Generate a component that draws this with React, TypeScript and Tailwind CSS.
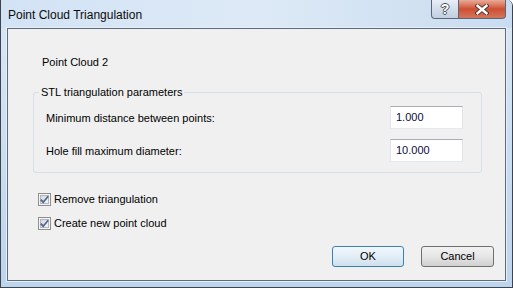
import React from "react";

function CheckBox() {
  return (
    <svg width="13" height="13" viewBox="0 0 13 13" className="shrink-0">
      <defs>
        <linearGradient id="cbg" x1="0" y1="0" x2="1" y2="1">
          <stop offset="0" stopColor="#d3d6da" />
          <stop offset="1" stopColor="#f7f7f7" />
        </linearGradient>
      </defs>
      <rect x="0.5" y="0.5" width="12" height="12" fill="#f4f4f4" stroke="#8e8f8f" />
      <rect x="2.5" y="2.5" width="8" height="8" fill="url(#cbg)" stroke="#b4b7bc" />
      <path
        d="M2.8 6.6 L5.2 9.2 L10.2 3.2"
        fill="none"
        stroke="#4c6291"
        strokeWidth="1.7"
      />
    </svg>
  );
}

function Check({ label, className }: { label: string; className?: string }) {
  return (
    <div className={"flex items-center gap-[3px] ml-[30px] h-[13px] " + (className ?? "")}>
      <CheckBox />
      <span className="leading-[13px]">{label}</span>
    </div>
  );
}

function Field({ label, value, className }: { label: string; value: string; className?: string }) {
  return (
    <div className={"flex items-center justify-between " + (className ?? "")}>
      <span className="leading-[14px]">{label}</span>
      <div className="w-[73px] h-[23px] bg-white border border-[#e2e3ea] border-t-[#abadb3] border-b-[#e3e9ef] flex items-center pl-[5px] text-[#0c0c3a]">
        {value}
      </div>
    </div>
  );
}

export default function App() {
  return (
    <div className="w-[513px] h-[288px] flex flex-col bg-linear-to-b from-[#dae8f6] to-[#bdd4ec] border-l border-r border-b border-[#3d4450] rounded-tr-[6px] font-['Liberation_Sans',Arial,sans-serif] text-black overflow-hidden">
      <div className="h-[28px] flex items-start justify-between bg-linear-to-r from-[#d2e3f5] via-[#dde9f6] to-[#c9dcf0]">
        <span className="pl-[7px] pt-[7px] text-[12px] leading-[16px] text-[#0b0b0b]">
          Point Cloud Triangulation
        </span>
        <div className="flex mr-[6px] h-[19px]">
          <div className="w-[28px] h-[19px] border border-t-0 border-[#59667a] rounded-bl-[4px] bg-linear-to-b from-[#e7eef7] via-[#d3deea] to-[#c2cfde] flex items-center justify-center">
            <span className="text-white font-bold text-[14px] leading-[14px] [text-shadow:1px_0_0_#4a5260,-1px_0_0_#4a5260,0_1px_0_#4a5260,0_-1px_0_#4a5260]">
              ?
            </span>
          </div>
          <div className="w-[47px] h-[19px] border border-t-0 border-l-0 border-[#59667a] rounded-br-[4px] bg-linear-to-b from-[#e9ab98] via-[#cd4f33] to-[#d4755a] flex items-center justify-center">
            <svg width="14" height="11" viewBox="0 0 14 11">
              <path d="M2.5 1.8 L11.5 9.2 M11.5 1.8 L2.5 9.2" stroke="#4a3028" strokeWidth="4.2" strokeLinecap="square" />
              <path d="M2.5 1.8 L11.5 9.2 M11.5 1.8 L2.5 9.2" stroke="#ffffff" strokeWidth="2.4" strokeLinecap="square" />
            </svg>
          </div>
        </div>
      </div>
      <div className="flex-1 px-[6px] pb-[6px] flex flex-col">
        <div className="flex-1 flex flex-col bg-[#f0f0f0] border border-[#5e6b7c] shadow-[0_0_0_1px_#e6eef8] text-[11px]">
          <p className="mt-[26px] ml-[34px] leading-[14px]">Point Cloud 2</p>
          <fieldset className="mt-[16px] ml-[25px] w-[449px] border border-[#d5dfe5] rounded-[3px] pl-[12px] pr-[18px] pb-[10px]">
            <legend className="ml-[-7px] px-[2px] leading-[14px]">STL triangulation parameters</legend>
            <Field className="mt-[7px]" label="Minimum distance between points:" value="1.000" />
            <Field className="mt-[10px]" label="Hole fill maximum diameter:" value="10.000" />
          </fieldset>
          <Check className="mt-[20px]" label="Remove triangulation" />
          <Check className="mt-[11px]" label="Create new point cloud" />
          <div className="mt-[16px] flex justify-end gap-[17px] pr-[11px]">
            <button className="w-[72px] h-[21px] border border-[#3c7fb1] rounded-[3px] bg-linear-to-b from-[#f1f7fb] via-[#e2eef7] to-[#cfe0ec] leading-[19px]">
              OK
            </button>
            <button className="w-[73px] h-[21px] border border-[#707070] rounded-[3px] bg-linear-to-b from-[#f2f2f2] via-[#e6e6e6] to-[#d0d0d0] leading-[19px]">
              Cancel
            </button>
          </div>
        </div>
      </div>
    </div>
  );
}
